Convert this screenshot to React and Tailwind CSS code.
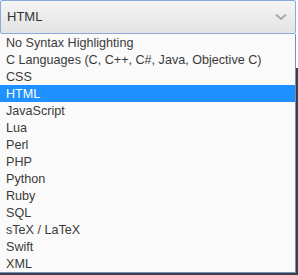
import React from "react";

const languages = [
  "No Syntax Highlighting",
  "C Languages (C, C++, C#, Java, Objective C)",
  "CSS",
  "HTML",
  "JavaScript",
  "Lua",
  "Perl",
  "PHP",
  "Python",
  "Ruby",
  "SQL",
  "sTeX / LaTeX",
  "Swift",
  "XML",
];

export default function App() {
  const selected = "HTML";

  return (
    <div
      className="w-[298px] h-[275px] bg-[#3c3f45] flex overflow-hidden"
      style={{ fontFamily: '"Liberation Sans", Arial, sans-serif' }}
    >
      <div className="w-[296px] flex flex-col">
        {/* select box */}
        <div className="h-[34px] bg-white">
          <div className="h-[34px] w-[296px] flex items-center justify-between pl-[6px] pr-[8px] border border-[#8aa9df] rounded-[2px] bg-gradient-to-b from-[#f5f5f5] to-[#e3e3e3] text-[13px] text-[#333]">
            <span>{selected}</span>
            <svg width="12" height="8" viewBox="0 0 12 8" fill="none">
              <path d="M1 1.5 L6 6 L11 1.5" stroke="#a8a8a8" strokeWidth="2" />
            </svg>
          </div>
        </div>

        {/* options list */}
        <ul className="h-[239px] bg-[#fafafa] border-r border-b border-[#7c8cb8] text-[12.6px] text-[#3a3a3a]">
          {languages.map((lang) => (
            <li
              key={lang}
              className={
                lang === selected
                  ? "h-[17px] leading-[18px] pl-[6px] bg-[#1e90ff] text-white whitespace-nowrap"
                  : "h-[17px] leading-[18px] pl-[6px] whitespace-nowrap"
              }
            >
              {lang}
            </li>
          ))}
        </ul>
      </div>
      <div className="w-[2px] flex flex-col">
        <div className="h-[68px] bg-white" />
      </div>
    </div>
  );
}
